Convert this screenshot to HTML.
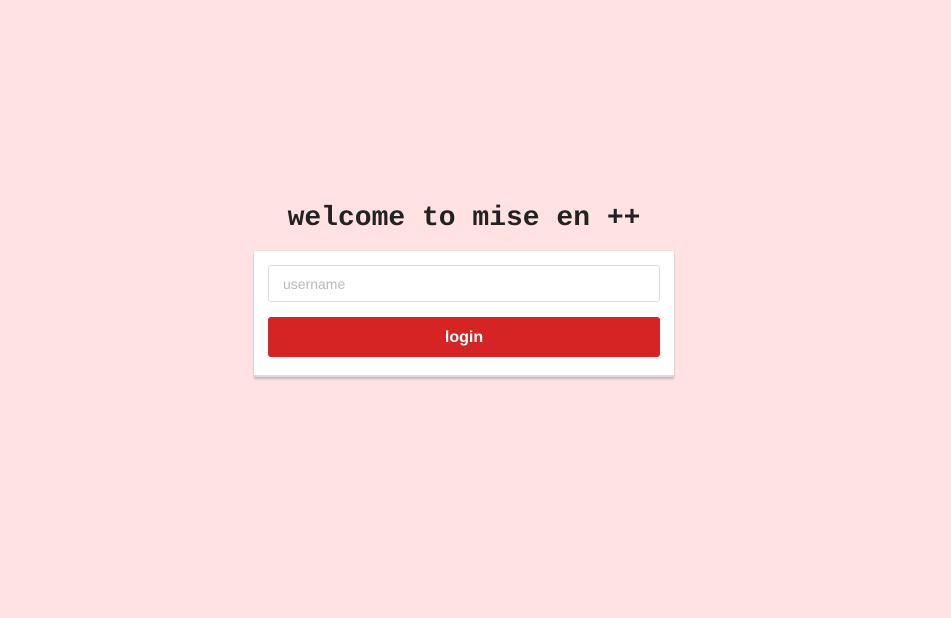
<!DOCTYPE html>
<html><head><style>
html,body{margin:0;padding:0;background:#ffe2e1;width:951px;height:618px;overflow:hidden}
h1{position:absolute;left:0;width:928px;text-align:center;top:201px;margin:0;font:bold 28px/36px "Liberation Mono",monospace;color:#222;}
.card{position:absolute;left:254px;top:251px;width:420px;height:124px;background:#fff;border-radius:2px;box-shadow:0 2px 2px rgba(0,0,0,.2),0 0 1px rgba(0,0,0,.15);border-bottom:2px solid #ddd;}
.inp{position:absolute;left:14px;top:14px;width:390px;height:35px;border:1px solid #ddd;border-radius:3px;font:14px/37px "Liberation Sans",sans-serif;color:#bbb}
.inp span{margin-left:14px}
.btn{position:absolute;left:14px;top:66px;width:392px;height:40px;background:#d62324;border-radius:3px;color:#fff;font:bold 16px/42px "Liberation Sans",sans-serif;text-align:center}
</style></head><body>
<h1>welcome to mise en ++</h1>
<div class="card"><div class="inp"><span>username</span></div><div class="btn">login</div></div>
</body></html>
